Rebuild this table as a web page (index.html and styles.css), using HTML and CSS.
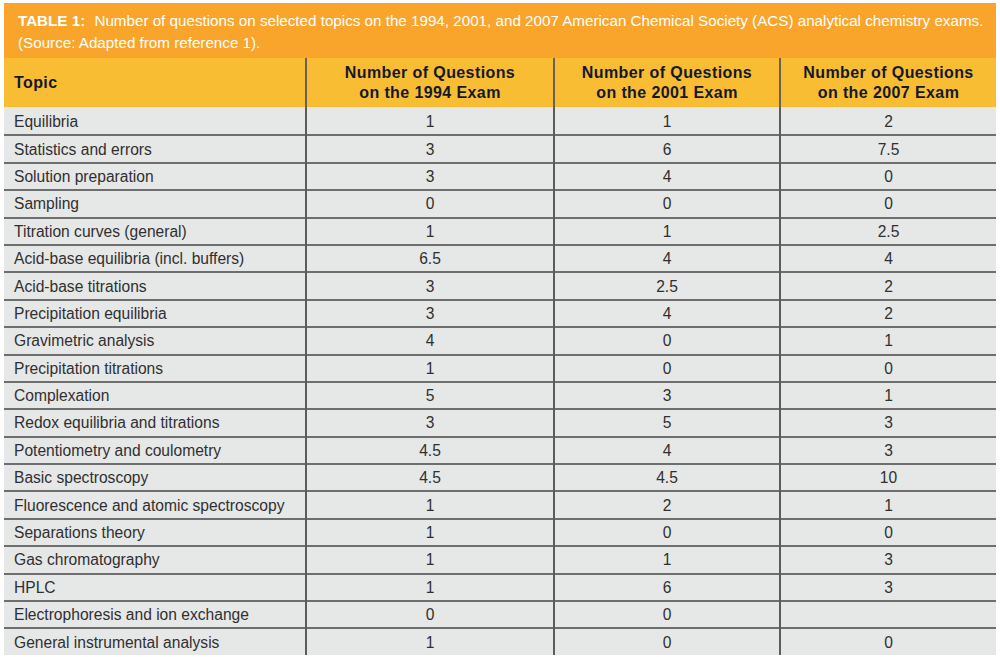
FILE: index.html
```html
<!DOCTYPE html>
<html lang="en">
<head>
<meta charset="utf-8">
<title>Table 1</title>
<link rel="stylesheet" href="styles.css">
</head>
<body>
<div class="wrap">
  <div class="caption"><span class="label">TABLE 1:</span> Number of questions on selected topics on the 1994, 2001, and 2007 American Chemical Society (ACS) analytical chemistry exams.<br>(Source: Adapted from reference 1).</div>
  <table class="data">
    <colgroup>
      <col class="c1"><col class="c2"><col class="c3"><col class="c4">
    </colgroup>
    <thead>
      <tr>
        <th class="topic">Topic</th>
        <th>Number of Questions<br>on the 1994 Exam</th>
        <th>Number of Questions<br>on the 2001 Exam</th>
        <th>Number of Questions<br>on the 2007 Exam</th>
      </tr>
    </thead>
    <tbody>
      <tr><td>Equilibria</td><td>1</td><td>1</td><td>2</td></tr>
      <tr><td>Statistics and errors</td><td>3</td><td>6</td><td>7.5</td></tr>
      <tr><td>Solution preparation</td><td>3</td><td>4</td><td>0</td></tr>
      <tr><td>Sampling</td><td>0</td><td>0</td><td>0</td></tr>
      <tr><td>Titration curves (general)</td><td>1</td><td>1</td><td>2.5</td></tr>
      <tr><td>Acid-base equilibria (incl. buffers)</td><td>6.5</td><td>4</td><td>4</td></tr>
      <tr><td>Acid-base titrations</td><td>3</td><td>2.5</td><td>2</td></tr>
      <tr><td>Precipitation equilibria</td><td>3</td><td>4</td><td>2</td></tr>
      <tr><td>Gravimetric analysis</td><td>4</td><td>0</td><td>1</td></tr>
      <tr><td>Precipitation titrations</td><td>1</td><td>0</td><td>0</td></tr>
      <tr><td>Complexation</td><td>5</td><td>3</td><td>1</td></tr>
      <tr><td>Redox equilibria and titrations</td><td>3</td><td>5</td><td>3</td></tr>
      <tr><td>Potentiometry and coulometry</td><td>4.5</td><td>4</td><td>3</td></tr>
      <tr><td>Basic spectroscopy</td><td>4.5</td><td>4.5</td><td>10</td></tr>
      <tr><td>Fluorescence and atomic spectroscopy</td><td>1</td><td>2</td><td>1</td></tr>
      <tr><td>Separations theory</td><td>1</td><td>0</td><td>0</td></tr>
      <tr><td>Gas chromatography</td><td>1</td><td>1</td><td>3</td></tr>
      <tr><td>HPLC</td><td>1</td><td>6</td><td>3</td></tr>
      <tr><td>Electrophoresis and ion exchange</td><td>0</td><td>0</td><td></td></tr>
      <tr><td>General instrumental analysis</td><td>1</td><td>0</td><td>0</td></tr>
    </tbody>
  </table>
</div>
</body>
</html>
```
FILE: styles.css
```css
html, body {
  margin: 0;
  padding: 0;
  background: #ffffff;
}
body {
  font-family: "Liberation Sans", Arial, sans-serif;
}
.wrap {
  padding: 3px 4px 0 4px;
  width: 992px;
}
.caption {
  background: #f9a42b;
  color: #ffffff;
  font-size: 15.2px;
  line-height: 21.5px;
  padding: 7px 14px 5px 14px;
  height: 43px;
  white-space: nowrap;
}
.caption .label {
  font-weight: bold;
  margin-right: 5px;
}
.data {
  width: 992px;
  border-collapse: collapse;
  table-layout: fixed;
}
.c1 { width: 302px; }
.c2 { width: 248px; }
.c3 { width: 226px; }
.c4 { width: 216px; }
.data th {
  background: #f9bd33;
  color: #14182a;
  font-weight: bold;
  font-size: 16px;
  line-height: 20px;
  letter-spacing: 0.4px;
  height: 49px;
  padding: 0;
  text-align: center;
  border-left: 2px solid #6a6250;
  border-bottom: 1px solid #dfe6ee;
}
.data th.topic {
  text-align: left;
  padding-left: 10px;
  border-left: none;
}
.data td {
  background: #e6e7e7;
  color: #303030;
  font-size: 15.6px;
  height: 24.4px;
  padding: 1px 0 0 0;
  text-align: center;
  border-left: 2px solid #5c5c5c;
  border-top: 2px solid #6e6e6e;
}
.data tbody tr:first-child td {
  border-top: none;
  height: 25.4px;
}
.data td:first-child {
  text-align: left;
  padding-left: 10px;
  border-left: none;
}
```
